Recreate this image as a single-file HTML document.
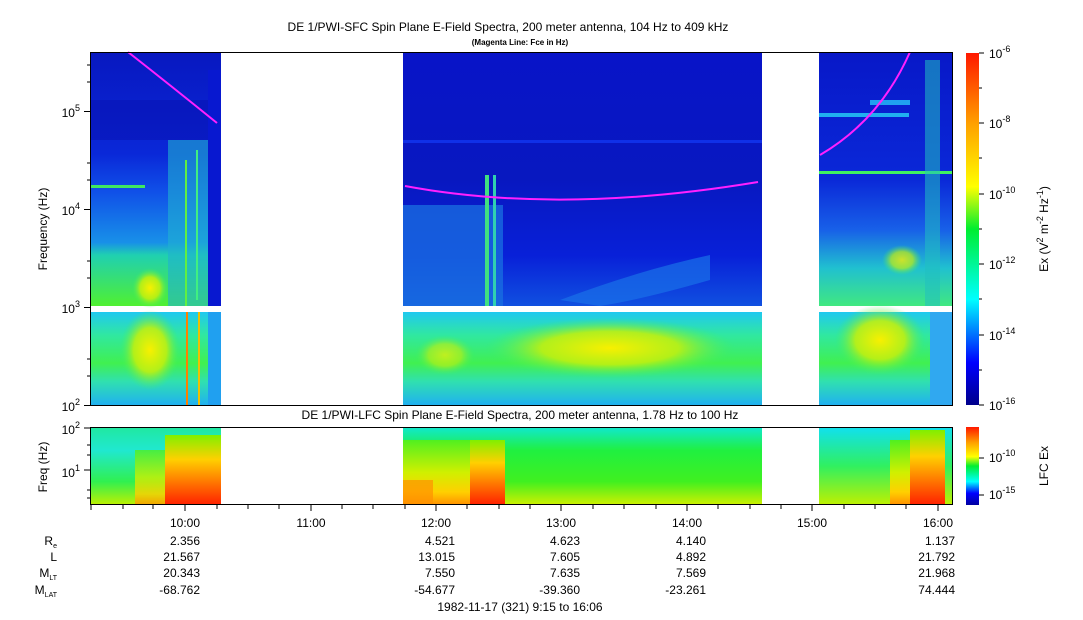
<!DOCTYPE html>
<html><head><meta charset="utf-8"><style>body{margin:0;background:#fff}svg{display:block;font-family:"Liberation Sans",sans-serif}</style></head><body>
<svg width="1083" height="620" viewBox="0 0 1083 620" xmlns="http://www.w3.org/2000/svg">
<defs>
<linearGradient id="cb" x1="0" y1="1" x2="0" y2="0">
<stop offset="0" stop-color="#00008a"/><stop offset="0.12" stop-color="#0000ff"/><stop offset="0.3" stop-color="#00ffff"/><stop offset="0.5" stop-color="#00ee30"/><stop offset="0.62" stop-color="#ffff00"/><stop offset="0.8" stop-color="#ffa000"/><stop offset="1" stop-color="#ff1800"/></linearGradient>
<linearGradient id="cb2" x1="0" y1="1" x2="0" y2="0">
<stop offset="0" stop-color="#0000a0"/><stop offset="0.15" stop-color="#0000ff"/><stop offset="0.3" stop-color="#00ffff"/><stop offset="0.5" stop-color="#00ee30"/><stop offset="0.62" stop-color="#ffff00"/><stop offset="0.8" stop-color="#ffa000"/><stop offset="1" stop-color="#ff1800"/></linearGradient>
<linearGradient id="s1" x1="0" y1="0" x2="0" y2="1">
<stop offset="0" stop-color="#0818c0"/><stop offset="0.4" stop-color="#0a28d8"/><stop offset="0.55" stop-color="#1050e8"/><stop offset="0.75" stop-color="#1890e8"/><stop offset="0.8" stop-color="#20d0b0"/><stop offset="1" stop-color="#50f030"/></linearGradient>
<linearGradient id="s2" x1="0" y1="0" x2="0" y2="1">
<stop offset="0" stop-color="#0814c8"/><stop offset="0.5" stop-color="#0818c0"/><stop offset="0.8" stop-color="#0820d8"/><stop offset="1" stop-color="#1050e0"/></linearGradient>
<linearGradient id="s3" x1="0" y1="0" x2="0" y2="1">
<stop offset="0" stop-color="#0818c8"/><stop offset="0.5" stop-color="#0a28d8"/><stop offset="0.7" stop-color="#1860e8"/><stop offset="0.85" stop-color="#20c0d0"/><stop offset="1" stop-color="#40e880"/></linearGradient>
<linearGradient id="lb" x1="0" y1="0" x2="0" y2="1">
<stop offset="0" stop-color="#20c8f0"/><stop offset="0.25" stop-color="#30e8a0"/><stop offset="0.55" stop-color="#40f050"/><stop offset="0.75" stop-color="#30e0b0"/><stop offset="1" stop-color="#20b0f0"/></linearGradient>
<linearGradient id="l1" x1="0" y1="0" x2="0" y2="1">
<stop offset="0" stop-color="#20e8a0"/><stop offset="0.3" stop-color="#20e8d0"/><stop offset="0.7" stop-color="#30f050"/><stop offset="1" stop-color="#c0f000"/></linearGradient>
<linearGradient id="lr" x1="0" y1="0" x2="0" y2="1">
<stop offset="0" stop-color="#80f000"/><stop offset="0.35" stop-color="#ffd000"/><stop offset="0.7" stop-color="#ff7000"/><stop offset="1" stop-color="#ff2000"/></linearGradient>
<linearGradient id="ly" x1="0" y1="0" x2="0" y2="1">
<stop offset="0" stop-color="#50f020"/><stop offset="0.5" stop-color="#d0f000"/><stop offset="0.8" stop-color="#ffd000"/><stop offset="1" stop-color="#ff9000"/></linearGradient>
<linearGradient id="l2" x1="0" y1="0" x2="0" y2="1">
<stop offset="0" stop-color="#10e8d0"/><stop offset="0.3" stop-color="#20f040"/><stop offset="0.7" stop-color="#40f020"/><stop offset="1" stop-color="#d0f000"/></linearGradient>
<linearGradient id="l3" x1="0" y1="0" x2="0" y2="1">
<stop offset="0" stop-color="#10e0f0"/><stop offset="0.5" stop-color="#30f060"/><stop offset="1" stop-color="#c0f000"/></linearGradient>
<radialGradient id="yb"><stop offset="0" stop-color="#f8f000"/><stop offset="0.55" stop-color="#c0f010" stop-opacity="0.9"/><stop offset="1" stop-color="#40f060" stop-opacity="0"/></radialGradient>
</defs>
<text x="508" y="31" font-size="12" text-anchor="middle">DE 1/PWI-SFC  Spin Plane E-Field Spectra, 200 meter antenna, 104 Hz to 409 kHz</text>
<text x="520" y="45" font-size="8" font-weight="bold" text-anchor="middle">(Magenta Line: Fce in Hz)</text>
<!-- seg1 -->
<rect x="90" y="52" width="131" height="254" fill="url(#s1)"/>
<rect x="90" y="100" width="131" height="40" fill="#0810b0" opacity="0.5"/>
<rect x="90" y="185" width="55" height="3" fill="#40e860"/>
<rect x="168" y="140" width="40" height="166" fill="#20b0d0" opacity="0.6"/>
<rect x="185" y="160" width="2" height="146" fill="#60f040"/>
<rect x="196" y="150" width="2" height="150" fill="#40f080"/>
<rect x="208" y="70" width="13" height="236" fill="#0818d0"/>
<ellipse cx="150" cy="288" rx="18" ry="20" fill="url(#yb)"/>
<rect x="90" y="312" width="131" height="93" fill="url(#lb)"/>
<rect x="208" y="312" width="13" height="93" fill="#20a0f0"/>
<ellipse cx="150" cy="350" rx="30" ry="40" fill="url(#yb)"/>
<rect x="186" y="312" width="2" height="93" fill="#ff8000"/>
<rect x="198" y="312" width="2" height="93" fill="#f0c000"/>
<!-- seg2 -->
<rect x="403" y="52" width="359" height="254" fill="url(#s2)"/>
<rect x="403" y="140" width="359" height="3" fill="#1030e8"/>
<rect x="403" y="205" width="100" height="101" fill="#1a70e0" opacity="0.75"/>
<rect x="485" y="175" width="4" height="131" fill="#40e080"/>
<rect x="493" y="175" width="3" height="131" fill="#30d0b0"/>
<path d="M560 300 Q640 270 710 255 L710 280 Q640 300 600 306Z" fill="#1a70e8" opacity="0.7"/>
<rect x="403" y="312" width="359" height="93" fill="url(#lb)"/>
<ellipse cx="610" cy="348" rx="125" ry="30" fill="url(#yb)"/>
<ellipse cx="445" cy="355" rx="30" ry="20" fill="url(#yb)" opacity="0.7"/>
<!-- seg3 -->
<rect x="819" y="52" width="133" height="254" fill="url(#s3)"/>
<rect x="870" y="100" width="40" height="5" fill="#20a0f0"/>
<rect x="819" y="113" width="90" height="4" fill="#20b0f0"/>
<rect x="819" y="171" width="133" height="3" fill="#40f060"/>
<rect x="925" y="60" width="15" height="246" fill="#20c0c0" opacity="0.55"/>
<ellipse cx="902" cy="260" rx="20" ry="15" fill="url(#yb)" opacity="0.8"/>
<rect x="819" y="312" width="133" height="93" fill="url(#lb)"/>
<ellipse cx="880" cy="340" rx="45" ry="35" fill="url(#yb)"/>
<rect x="930" y="312" width="22" height="93" fill="#30a8f0"/>
<path d="M128 52 Q170 85 217 123" stroke="#ff20ff" stroke-width="2" fill="none"/>
<path d="M405 186 Q560 215 758 182" stroke="#ff20ff" stroke-width="2" fill="none"/>
<path d="M820 155 Q880 120 910 52" stroke="#ff20ff" stroke-width="2" fill="none"/>
<rect x="90.5" y="52.5" width="862" height="353" fill="none" stroke="#000"/>
<g font-size="12" text-anchor="end"><text x="80" y="117">10<tspan dy="-6" font-size="9">5</tspan></text><text x="80" y="215">10<tspan dy="-6" font-size="9">4</tspan></text><text x="80" y="313">10<tspan dy="-6" font-size="9">3</tspan></text><text x="80" y="411">10<tspan dy="-6" font-size="9">2</tspan></text></g>
<text transform="translate(47,229) rotate(-90)" font-size="12" text-anchor="middle">Frequency (Hz)</text>
<g stroke="#000"><path d="M84 111.5h6M84 209.5h6M84 307.5h6M84 405.5h6M87 82h3M87 65h3M87 180h3M87 163h3M87 278h3M87 261h3M87 376h3M87 359h3"/></g>
<!-- colorbar -->
<rect x="966" y="53" width="13" height="352" fill="url(#cb)"/>
<rect x="966" y="427" width="13" height="78" fill="url(#cb2)"/>
<g font-size="12"><text x="989" y="58">10<tspan dy="-6" font-size="9">-6</tspan></text><text x="989" y="128">10<tspan dy="-6" font-size="9">-8</tspan></text><text x="989" y="199">10<tspan dy="-6" font-size="9">-10</tspan></text><text x="989" y="269">10<tspan dy="-6" font-size="9">-12</tspan></text><text x="989" y="340">10<tspan dy="-6" font-size="9">-14</tspan></text><text x="989" y="410">10<tspan dy="-6" font-size="9">-16</tspan></text><text x="989" y="462">10<tspan dy="-6" font-size="9">-10</tspan></text><text x="989" y="499">10<tspan dy="-6" font-size="9">-15</tspan></text></g>
<g stroke="#000"><path d="M979 53h5M979 123h5M979 194h5M979 264h5M979 335h5M979 405h5M979 88h3M979 158h3M979 229h3M979 299h3M979 370h3M979 458h5M979 495h5"/></g>
<text transform="translate(1048,229) rotate(-90)" font-size="12" text-anchor="middle">Ex (V<tspan dy="-5" font-size="9">2</tspan><tspan dy="5"> m</tspan><tspan dy="-5" font-size="9">-2</tspan><tspan dy="5"> Hz</tspan><tspan dy="-5" font-size="9">-1</tspan><tspan dy="5">)</tspan></text>
<text transform="translate(1048,466) rotate(-90)" font-size="12" text-anchor="middle">LFC Ex</text>
<!-- LFC panel -->
<text x="520" y="419" font-size="12" text-anchor="middle">DE 1/PWI-LFC  Spin Plane E-Field Spectra, 200 meter antenna, 1.78 Hz to 100 Hz</text>
<rect x="90" y="427" width="131" height="78" fill="url(#l1)"/>
<rect x="135" y="450" width="30" height="55" fill="url(#ly)" opacity="0.8"/>
<rect x="165" y="435" width="56" height="70" fill="url(#lr)"/>
<rect x="403" y="427" width="359" height="78" fill="url(#l2)"/>
<rect x="403" y="440" width="102" height="65" fill="url(#ly)"/>
<rect x="470" y="440" width="35" height="65" fill="url(#lr)"/>
<rect x="403" y="480" width="30" height="25" fill="#ff9000" opacity="0.7"/>
<rect x="819" y="427" width="133" height="78" fill="url(#l3)"/>
<rect x="890" y="440" width="20" height="65" fill="url(#ly)"/>
<rect x="910" y="430" width="35" height="75" fill="url(#lr)"/>
<rect x="90.5" y="427.5" width="862" height="77" fill="none" stroke="#000"/>
<g font-size="12" text-anchor="end"><text x="80" y="434">10<tspan dy="-6" font-size="9">2</tspan></text><text x="80" y="477">10<tspan dy="-6" font-size="9">1</tspan></text></g>
<text transform="translate(47,467) rotate(-90)" font-size="12" text-anchor="middle">Freq (Hz)</text>
<g stroke="#000"><path d="M84 428h6M84 470h6M87 445h3M87 455h3M87 490h3M87 498h3"/>
<path d="M91 505v5M123 505v4M153 505v4M185 505v6M217 505v4M248 505v4M279 505v4M311 505v6M342 505v4M373 505v4M405 505v4M436 505v6M467 505v4M499 505v4M530 505v4M561 505v6M593 505v4M624 505v4M656 505v4M687 505v6M718 505v4M750 505v4M781 505v4M812 505v6M844 505v4M875 505v4M906 505v4M938 505v6"/></g>
<g font-size="12" text-anchor="middle"><text x="185" y="527">10:00</text><text x="311" y="527">11:00</text><text x="436" y="527">12:00</text><text x="561" y="527">13:00</text><text x="687" y="527">14:00</text><text x="812" y="527">15:00</text><text x="938" y="527">16:00</text></g>
<g font-size="12" text-anchor="end">
<text x="57" y="545">R<tspan dy="3" font-size="7">e</tspan></text><text x="57" y="561">L</text><text x="57" y="577">M<tspan dy="3" font-size="7">LT</tspan></text><text x="57" y="594">M<tspan dy="3" font-size="7">LAT</tspan></text>
<text x="200" y="545">2.356</text><text x="200" y="561">21.567</text><text x="200" y="577">20.343</text><text x="200" y="594">-68.762</text>
<text x="455" y="545">4.521</text><text x="455" y="561">13.015</text><text x="455" y="577">7.550</text><text x="455" y="594">-54.677</text>
<text x="580" y="545">4.623</text><text x="580" y="561">7.605</text><text x="580" y="577">7.635</text><text x="580" y="594">-39.360</text>
<text x="706" y="545">4.140</text><text x="706" y="561">4.892</text><text x="706" y="577">7.569</text><text x="706" y="594">-23.261</text>
<text x="955" y="545">1.137</text><text x="955" y="561">21.792</text><text x="955" y="577">21.968</text><text x="955" y="594">74.444</text>
</g>
<text x="520" y="611" font-size="12" text-anchor="middle">1982-11-17 (321) 9:15 to 16:06</text>
</svg>
</body></html>
